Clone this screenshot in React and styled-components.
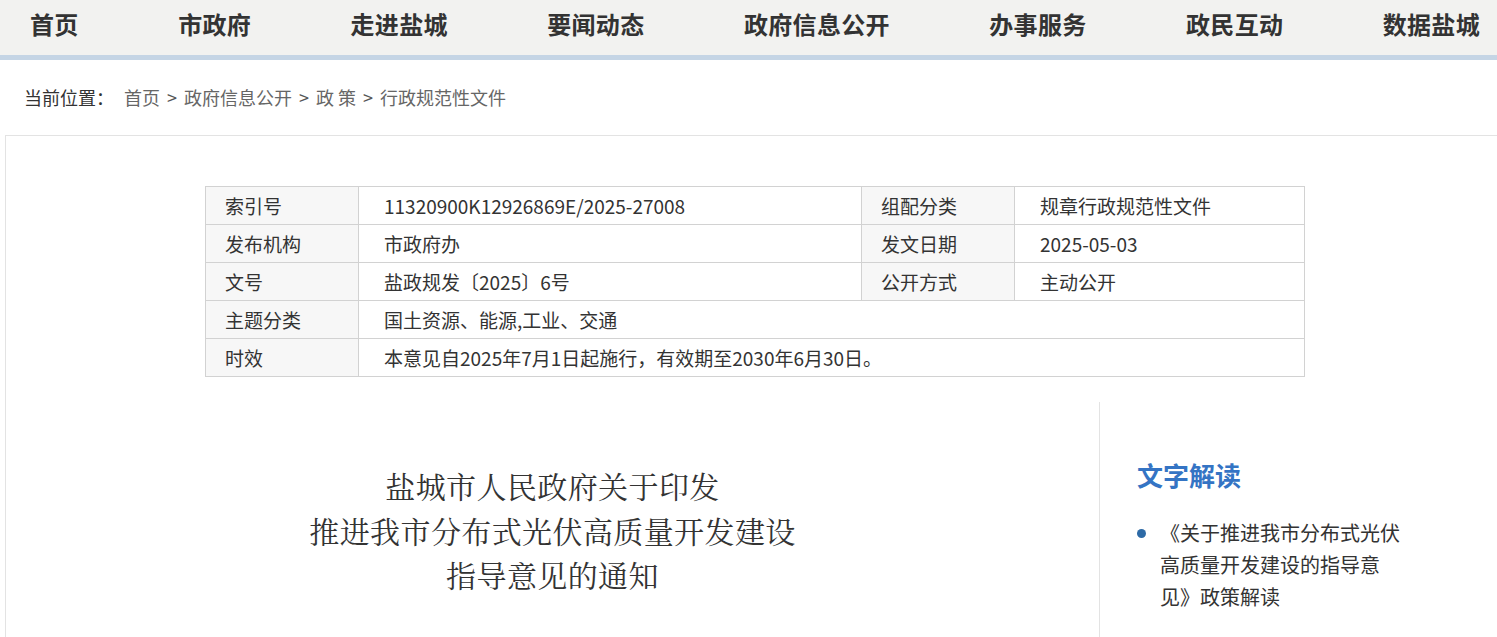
import React from "react";
import styled, { createGlobalStyle } from "styled-components";

const Global = createGlobalStyle`
  html, body { margin: 0; padding: 0; overflow-x: hidden; background: #fff; }
  body { font-family: "Noto Sans CJK SC", "Noto Sans", sans-serif; color: #333; }
  * { box-sizing: border-box; }
`;

const Page = styled.div`
  width: 1500px;
`;

const Nav = styled.nav`
  height: 60px;
  background: #f2f2f0;
  border-bottom: 5px solid #c5d5e5;
  display: flex;
  align-items: center;
  justify-content: space-between;
  padding: 0 20px 8px 30px;
`;

const NavItem = styled.a`
  font-size: 24px;
  font-weight: 700;
  color: #333;
  text-decoration: none;
  line-height: 1;
  letter-spacing: 0.3px;
`;

const Crumbs = styled.div`
  height: 75px;
  display: flex;
  align-items: center;
  padding: 0 0 2px 24px;
  font-size: 18px;
  color: #666;
`;

const CrumbLead = styled.span`
  color: #333;
  margin-right: 10px;
`;

const Sep = styled.span`
  margin: 0 7px;
  color: #555;
`;

const Box = styled.div`
  margin-left: 5px;
  width: 1500px;
  border-top: 1px solid #e3e3e3;
  border-left: 1px solid #e3e3e3;
  padding-top: 50px;
`;

const Table = styled.table`
  margin-left: 199px;
  width: 1100px;
  border-collapse: collapse;
  font-size: 19px;
  color: #333;
`;

const Label = styled.td`
  height: 38px;
  padding: 0 0 0 19px;
  background: #f7f7f7;
  border: 1px solid #d2d2d2;
  width: ${(p) => p.$w}px;
  line-height: 1;
`;

const Value = styled.td`
  height: 38px;
  padding: 0 0 0 25px;
  border: 1px solid #d2d2d2;
  width: ${(p) => (p.$w ? p.$w + "px" : "auto")};
  line-height: 1;
`;

const Lower = styled.div`
  display: flex;
  margin-top: 25px;
`;

const Main = styled.div`
  width: 1093px;
  padding-top: 61px;
  display: flex;
  justify-content: center;
`;

const Title = styled.h1`
  margin: 0;
  font-family: "Noto Serif CJK SC", "Noto Sans CJK SC", serif;
  font-weight: 400;
  font-size: 30px;
  line-height: 44.5px;
  text-align: center;
  color: #333;
  letter-spacing: 0.4px;
`;

const Side = styled.aside`
  border-left: 1px solid #e3e3e3;
  min-height: 260px;
  padding: 57px 0 0 37px;
`;

const SideHead = styled.h2`
  margin: 0 0 27px;
  font-size: 26px;
  font-weight: 700;
  color: #3474c4;
  line-height: 1.2;
`;

const List = styled.ul`
  margin: 0;
  padding: 0;
  list-style: none;
`;

const Item = styled.li`
  position: relative;
  width: 245px;
  margin-left: 23px;
  font-size: 20px;
  line-height: 32px;
  color: #333;
  &::before {
    content: "";
    position: absolute;
    left: -23px;
    top: 12px;
    width: 9px;
    height: 9px;
    border-radius: 50%;
    background: #2d6aa6;
  }
`;

const navItems = ["首页", "市政府", "走进盐城", "要闻动态", "政府信息公开", "办事服务", "政民互动", "数据盐城"];

export default function App() {
  return (
    <Page>
      <Global />
      <Nav>
        {navItems.map((n) => (
          <NavItem key={n}>{n}</NavItem>
        ))}
      </Nav>
      <Crumbs>
        <CrumbLead>当前位置：</CrumbLead>
        <span>首页</span>
        <Sep>&gt;</Sep>
        <span>政府信息公开</span>
        <Sep>&gt;</Sep>
        <span>政 策</span>
        <Sep>&gt;</Sep>
        <span>行政规范性文件</span>
      </Crumbs>
      <Box>
        <Table>
          <tbody>
            <tr>
              <Label $w={153}>索引号</Label>
              <Value $w={503}>11320900K12926869E/2025-27008</Value>
              <Label $w={153}>组配分类</Label>
              <Value>规章行政规范性文件</Value>
            </tr>
            <tr>
              <Label>发布机构</Label>
              <Value>市政府办</Value>
              <Label>发文日期</Label>
              <Value>2025-05-03</Value>
            </tr>
            <tr>
              <Label>文号</Label>
              <Value>盐政规发〔2025〕6号</Value>
              <Label>公开方式</Label>
              <Value>主动公开</Value>
            </tr>
            <tr>
              <Label>主题分类</Label>
              <Value colSpan={3}>国土资源、能源,工业、交通</Value>
            </tr>
            <tr>
              <Label>时效</Label>
              <Value colSpan={3}>本意见自2025年7月1日起施行，有效期至2030年6月30日。</Value>
            </tr>
          </tbody>
        </Table>
        <Lower>
          <Main>
            <Title>
              盐城市人民政府关于印发
              <br />
              推进我市分布式光伏高质量开发建设
              <br />
              指导意见的通知
            </Title>
          </Main>
          <Side>
            <SideHead>文字解读</SideHead>
            <List>
              <Item>《关于推进我市分布式光伏高质量开发建设的指导意见》政策解读</Item>
            </List>
          </Side>
        </Lower>
      </Box>
    </Page>
  );
}
